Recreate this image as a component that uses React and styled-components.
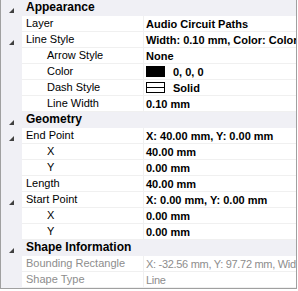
import React from "react";
import styled, { createGlobalStyle } from "styled-components";

const GlobalStyle = createGlobalStyle`
	html, body {
		margin: 0;
		padding: 0;
		background: #ffffff;
	}
`;

const Grid = styled.div`
	width: 295px;
	height: 288px;
	border: 1px solid #a0a0a0;
	border-top: none;
	background: #ffffff;
	overflow: hidden;
	font-family: Tahoma, "Liberation Sans", Arial, sans-serif;
	font-size: 11px;
	color: #000000;
`;

const Row = styled.div`
	display: grid;
	grid-template-columns: 21px 122px 152px;
	height: 16px;
	background: ${p => (p.$group ? "#f0f0f5" : "#ffffff")};
`;

const Gutter = styled.div`
	display: flex;
	align-items: flex-end;
	justify-content: center;
	padding-bottom: 3px;
	box-sizing: border-box;
	background: #f0f0f5;
`;

const Name = styled.div`
	padding-left: ${p => 4 + p.$level * 21}px;
	box-sizing: border-box;
	line-height: 15px;
	white-space: nowrap;
	overflow: hidden;
	border-bottom: 1px solid ${p => (p.$group ? "#f0f0f5" : "#f0f0f0")};
	border-right: 1px solid ${p => (p.$group ? "#f0f0f5" : "#f0f0f0")};
	color: ${p => (p.$disabled ? "#8d8d8d" : "#000000")};
	font-weight: ${p => (p.$group ? "bold" : "normal")};
`;

const GroupTitle = styled.div`
	grid-column: 2 / 4;
	padding-left: 4px;
	line-height: 15px;
	font-weight: bold;
	font-size: 12px;
	white-space: nowrap;
`;

const Value = styled.div`
	display: flex;
	align-items: center;
	gap: 8px;
	padding-left: 2px;
	box-sizing: border-box;
	height: 16px;
	white-space: nowrap;
	overflow: hidden;
	border-bottom: 1px solid #f0f0f0;
	font-weight: ${p => (p.$disabled ? "normal" : "bold")};
	color: ${p => (p.$disabled ? "#8d8d8d" : "#000000")};
	letter-spacing: ${p => (p.$disabled ? "-0.3px" : "0")};
`;

const ColorSwatch = styled.span`
	display: inline-block;
	flex: none;
	width: 19px;
	height: 11px;
	background: ${p => p.$color};
`;

const DashSwatch = styled.span`
	display: inline-block;
	flex: none;
	width: 17px;
	height: 9px;
	border: 1px solid #000000;
	position: relative;
	&::after {
		content: "";
		position: absolute;
		left: 0;
		right: 0;
		top: 4px;
		height: 1px;
		background: #000000;
	}
`;

const Expander = () => (
	<svg width="5" height="5" viewBox="0 0 5 5">
		<polygon points="5,0 5,5 0,5" fill="#404040" />
	</svg>
);

const rows = [
	{ group: "Appearance" },
	{ name: "Layer", value: "Audio Circuit Paths" },
	{ name: "Line Style", value: "Width: 0.10 mm, Color: Color", open: true },
	{ name: "Arrow Style", value: "None", level: 1 },
	{ name: "Color", value: "0, 0, 0", level: 1, swatch: "color" },
	{ name: "Dash Style", value: "Solid", level: 1, swatch: "dash" },
	{ name: "Line Width", value: "0.10 mm", level: 1 },
	{ group: "Geometry" },
	{ name: "End Point", value: "X: 40.00 mm, Y: 0.00 mm", open: true },
	{ name: "X", value: "40.00 mm", level: 1 },
	{ name: "Y", value: "0.00 mm", level: 1 },
	{ name: "Length", value: "40.00 mm" },
	{ name: "Start Point", value: "X: 0.00 mm, Y: 0.00 mm", open: true },
	{ name: "X", value: "0.00 mm", level: 1 },
	{ name: "Y", value: "0.00 mm", level: 1 },
	{ group: "Shape Information" },
	{ name: "Bounding Rectangle", value: "X: -32.56 mm, Y: 97.72 mm, Width: 40.00 mm", disabled: true },
	{ name: "Shape Type", value: "Line", disabled: true }
];

const PropertyRow = ({ row }) => {
	if (row.group) {
		return (
			<Row $group>
				<Gutter>
					<Expander />
				</Gutter>
				<GroupTitle>{row.group}</GroupTitle>
			</Row>
		);
	}
	return (
		<Row>
			<Gutter>{row.open ? <Expander /> : null}</Gutter>
			<Name $level={row.level || 0} $disabled={row.disabled}>
				{row.name}
			</Name>
			<Value $disabled={row.disabled}>
				{row.swatch === "color" ? <ColorSwatch $color="#000000" /> : null}
				{row.swatch === "dash" ? <DashSwatch /> : null}
				<span>{row.value}</span>
			</Value>
		</Row>
	);
};

export default function App() {
	return (
		<>
			<GlobalStyle />
			<Grid>
				{rows.map((row, i) => (
					<PropertyRow key={i} row={row} />
				))}
			</Grid>
		</>
	);
}
